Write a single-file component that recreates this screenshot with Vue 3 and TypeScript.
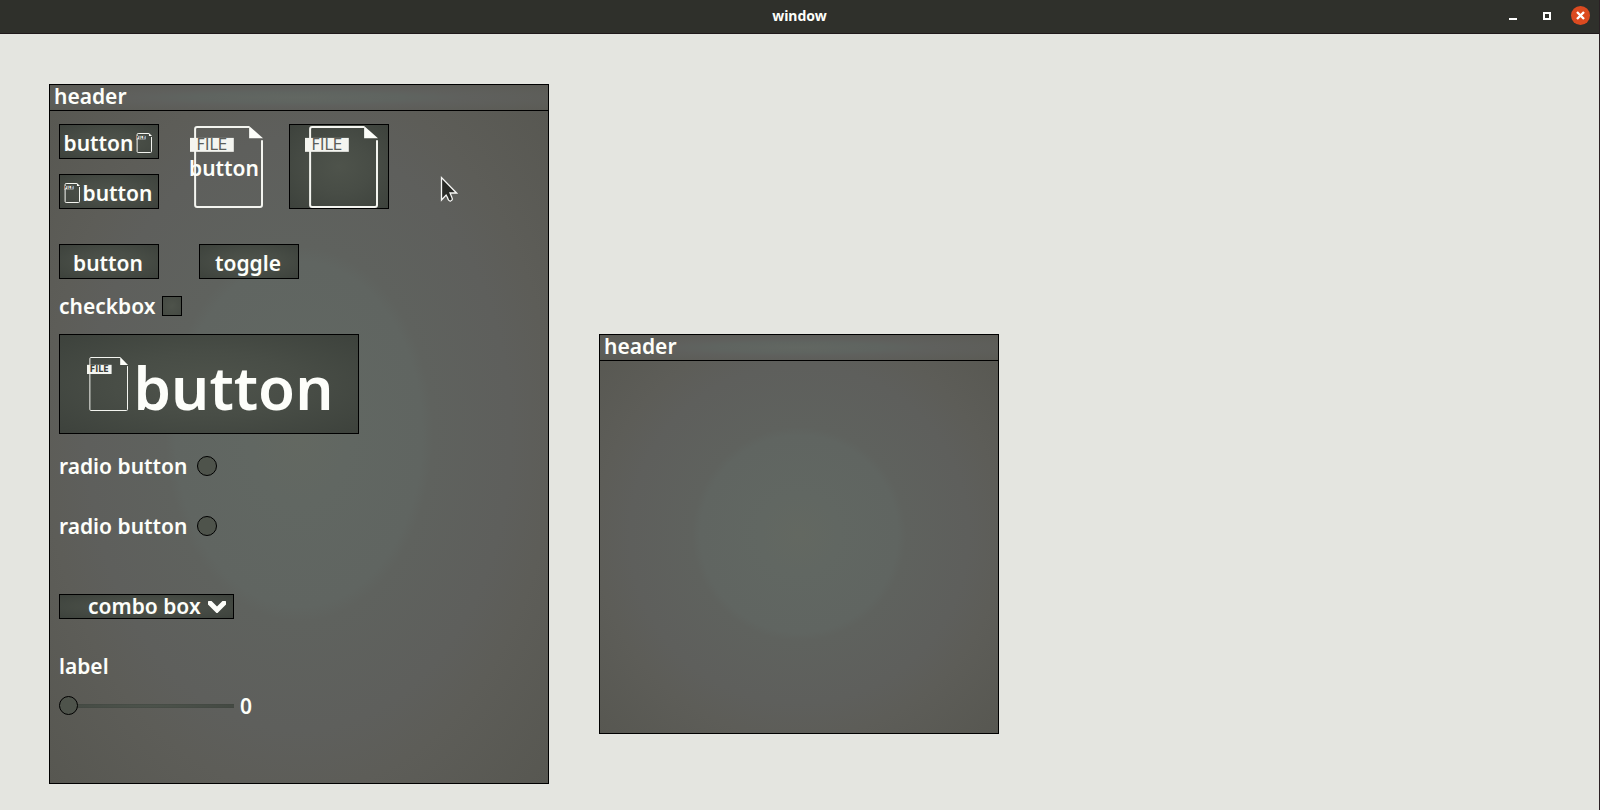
<script setup lang="ts">
import { h, ref } from 'vue'

interface FileIconProps {
  w: number
  h: number
  font: number
  stroke: number
}

const FileIcon = (p: FileIconProps) => {
  const { w, h: ht, font, stroke } = p
  const left = w * 0.07
  const right = w - stroke / 2
  const top = stroke / 2
  const bottom = ht - stroke / 2
  const foldX = w * 0.81
  const foldY = ht * 0.15
  const r = stroke
  return h('svg', { width: w, height: ht, viewBox: `0 0 ${w} ${ht}`, 'aria-hidden': 'true' }, [
    h('path', {
      d: `M${foldX} ${top}H${left + r}Q${left} ${top} ${left} ${top + r}V${bottom - r}Q${left} ${bottom} ${left + r} ${bottom}H${right - r}Q${right} ${bottom} ${right} ${bottom - r}V${foldY + stroke}`,
      fill: 'none',
      stroke: '#f4f5f0',
      'stroke-width': stroke,
    }),
    h('path', { d: `M${foldX} 0L${w} ${foldY}H${foldX}Z`, fill: '#fdfefa' }),
    h('rect', { x: 0, y: ht * 0.145, width: w * 0.6, height: ht * 0.17, fill: '#f4f5f0' }),
    h(
      'text',
      {
        x: w * 0.3,
        y: ht * 0.23 + font * 0.37,
        'text-anchor': 'middle',
        'font-family': '"DejaVu Sans", sans-serif',
        'font-weight': font < 12 ? 700 : 400,
        'font-size': font,
        fill: font < 12 ? '#3c413b' : '#5b5e59',
      },
      'FILE',
    ),
  ])
}
FileIcon.props = ['w', 'h', 'font', 'stroke']

const checked = ref(false)
const choice = ref('')
const combo = ref('combo box')
const amount = ref(0)
</script>

<template>
  <div class="window">
    <header class="titlebar">
      <h1 class="title">window</h1>
      <div class="controls">
        <button class="control" type="button" aria-label="Minimize">
          <svg width="19" height="19" viewBox="0 0 19 19"><path d="M6 12h8v2H6z" fill="#fff" /></svg>
        </button>
        <button class="control" type="button" aria-label="Maximize">
          <svg width="19" height="19" viewBox="0 0 19 19"><path d="M7 7h6v6H7z" fill="none" stroke="#fff" stroke-width="2" /></svg>
        </button>
        <button class="control close" type="button" aria-label="Close">
          <svg width="19" height="19" viewBox="0 0 19 19"><path d="M6 6l7 7M13 6l-7 7" fill="none" stroke="#fff" stroke-width="2.4" /></svg>
        </button>
      </div>
    </header>

    <main class="desktop">
      <section class="panel main-panel">
        <h2 class="panel-header">header</h2>
        <div class="panel-body">
          <div class="toolbar">
            <div class="stack">
              <button class="btn" type="button">button<FileIcon :w="16" :h="20" :font="4" :stroke="1" /></button>
              <button class="btn" type="button"><FileIcon :w="16" :h="20" :font="4" :stroke="1" />button</button>
            </div>
            <button class="btn tall bare" type="button">
              <FileIcon :w="73" :h="82" :font="15" :stroke="2" />
              <span class="over">button</span>
            </button>
            <button class="btn tall" type="button" aria-label="File">
              <FileIcon :w="73" :h="82" :font="15" :stroke="2" />
            </button>
          </div>

          <div class="pair">
            <button class="btn" type="button">button</button>
            <button class="btn" type="button" aria-pressed="false">toggle</button>
          </div>

          <div class="field check-field">
            <label for="check">checkbox</label>
            <input id="check" v-model="checked" class="check" type="checkbox" />
          </div>

          <button class="btn large" type="button">
            <FileIcon :w="41" :h="54" :font="8" :stroke="1" />
            <span class="large-text">button</span>
          </button>

          <div class="radios">
            <div class="field">
              <label for="radio-a">radio button</label>
              <input id="radio-a" v-model="choice" class="check round" type="radio" name="choice" value="a" />
            </div>
            <div class="field">
              <label for="radio-b">radio button</label>
              <input id="radio-b" v-model="choice" class="check round" type="radio" name="choice" value="b" />
            </div>
          </div>

          <div class="combo">
            <select v-model="combo" class="combo-select" aria-label="combo box">
              <option>combo box</option>
            </select>
            <svg class="chevron" width="18" height="12" viewBox="0 0 18 12"><path d="M2 2l7 7 7-7" fill="none" stroke="#fdfefa" stroke-width="5" stroke-linecap="round" /></svg>
          </div>

          <label class="slider-label" for="slider">label</label>
          <div class="field slider-field">
            <input id="slider" v-model.number="amount" class="slider" type="range" min="0" max="100" />
            <output for="slider">{{ amount }}</output>
          </div>
        </div>
      </section>

      <section class="panel side-panel">
        <h2 class="panel-header">header</h2>
      </section>
    </main>

    <svg class="pointer" width="18" height="27" viewBox="0 0 18 27" aria-hidden="true">
      <path d="M1.5 2.5V25l4.6-5 1.2 2.2q1.2 4.3 3.3 3.8 2.6-.8 1.2-3.8L10 18h6.5Z" fill="#292a26" stroke="#f7f7f5" stroke-width="1.3" />
    </svg>
  </div>
</template>

<style>
html,
body,
#app {
  min-height: 100%;
}
body {
  margin: 0;
  background: #e4e5e0;
}
</style>

<style scoped>
.window {
  position: relative;
  box-sizing: border-box;
  display: flex;
  flex-direction: column;
  min-height: 100vh;
  border-right: 1px solid #2a2024;
  background: #e4e5e0;
  color: #fdfefa;
  font: 600 21px/24px "Noto Sans", "Open Sans", sans-serif;
}
.titlebar {
  box-sizing: border-box;
  display: grid;
  grid-template-columns: 1fr auto 1fr;
  align-items: center;
  height: 34px;
  padding: 0 9px 2px;
  border-bottom: 1px solid #1f191b;
  background: #2f302b;
}
.title {
  grid-column: 2;
  margin: 0;
  font-size: 14px;
  line-height: 20px;
  font-weight: 700;
}
.controls {
  display: flex;
  justify-content: flex-end;
  gap: 15px;
}
.control {
  display: flex;
  width: 19px;
  height: 19px;
  padding: 0;
  border: 0;
  border-radius: 50%;
  background: none;
}
.close {
  background: #db4a20;
}
.desktop {
  display: flex;
  flex: 1;
  align-items: flex-start;
  gap: 50px;
  padding: 50px 49px 26px;
}
.panel {
  box-sizing: border-box;
  border: 1px solid #000;
  background: radial-gradient(ellipse farthest-corner, #636861 0%, #616762 14%, #606561 35%, #5f625e 38%, #5e5f5c 60%, #5d5d58 72%, #575751 100%);
}
.main-panel {
  flex: 0 1 500px;
  min-height: 700px;
}
.side-panel {
  flex: 0 1 400px;
  min-height: 400px;
  margin-top: 250px;
}
.panel-header {
  box-sizing: border-box;
  height: 26px;
  margin: 0;
  padding: 0 4px;
  border-bottom: 1px solid #000;
  background: radial-gradient(ellipse farthest-corner, #626762 0%, #5f6460 30%, #5f605d 48%, #5b5b55 100%);
  font: inherit;
  line-height: 22px;
}
.panel-body {
  display: flex;
  flex-direction: column;
  align-items: flex-start;
  padding: 13px 9px 60px;
}
.toolbar {
  display: flex;
  gap: 15px;
}
.stack {
  display: flex;
  flex-direction: column;
  gap: 15px;
}
.btn {
  position: relative;
  box-sizing: border-box;
  display: flex;
  align-items: center;
  justify-content: center;
  gap: 3px;
  width: 100px;
  height: 35px;
  padding: 2px 2px 0 0;
  border: 1px solid #000;
  background: radial-gradient(ellipse farthest-corner, #4e534b 0%, #484d46 45%, #3d423c 100%);
  color: inherit;
  font: inherit;
}
.tall {
  height: 85px;
  padding: 0 0 0 4px;
}
.bare {
  border-color: transparent;
  background: none;
}
.over {
  position: absolute;
  inset: 0;
  line-height: 86px;
}
.pair {
  display: flex;
  gap: 40px;
  margin-top: 35px;
}
.field {
  display: flex;
  align-items: center;
  gap: 6px;
  height: 24px;
}
.check-field {
  margin-top: 15px;
}
.check {
  appearance: none;
  box-sizing: border-box;
  width: 20px;
  height: 20px;
  margin: 0;
  border: 1px solid #000;
  background: radial-gradient(#4e534b, #454a43);
}
.round {
  border-radius: 50%;
  background: #4e534b;
}
.check:checked {
  background: #fdfefa;
}
.large {
  gap: 6px;
  width: 300px;
  height: 100px;
  margin-top: 16px;
  padding: 0 0 0 2px;
}
.large-text {
  padding-top: 6px;
  font-size: 60px;
  line-height: 80px;
}
.radios {
  display: flex;
  flex-direction: column;
  gap: 36px;
  margin-top: 20px;
}
.radios label {
  min-width: 132px;
}
.combo {
  display: flex;
  align-items: center;
  position: relative;
  margin-top: 56px;
}
.combo-select {
  appearance: none;
  box-sizing: border-box;
  width: 175px;
  height: 25px;
  padding: 0 0 2px 28px;
  border: 1px solid #000;
  border-radius: 0;
  background: radial-gradient(ellipse farthest-corner, #4e534b 0%, #484d46 45%, #3d423c 100%);
  color: inherit;
  font: inherit;
  line-height: 20px;
}
.chevron {
  position: absolute;
  right: 8px;
  pointer-events: none;
}
.slider-label {
  margin-top: 35px;
}
.slider-field {
  margin-top: 16px;
}
.slider {
  appearance: none;
  width: 175px;
  height: 19px;
  margin: 0;
  background: none;
}
.slider::-webkit-slider-runnable-track {
  height: 4px;
  background: radial-gradient(ellipse farthest-corner, #4e554d, #40453f);
}
.slider::-webkit-slider-thumb {
  appearance: none;
  box-sizing: border-box;
  width: 19px;
  height: 19px;
  margin-top: -8px;
  border: 1px solid #000;
  border-radius: 50%;
  background: #4e534b;
}
.pointer {
  position: absolute;
  left: 440px;
  top: 175px;
}
</style>
